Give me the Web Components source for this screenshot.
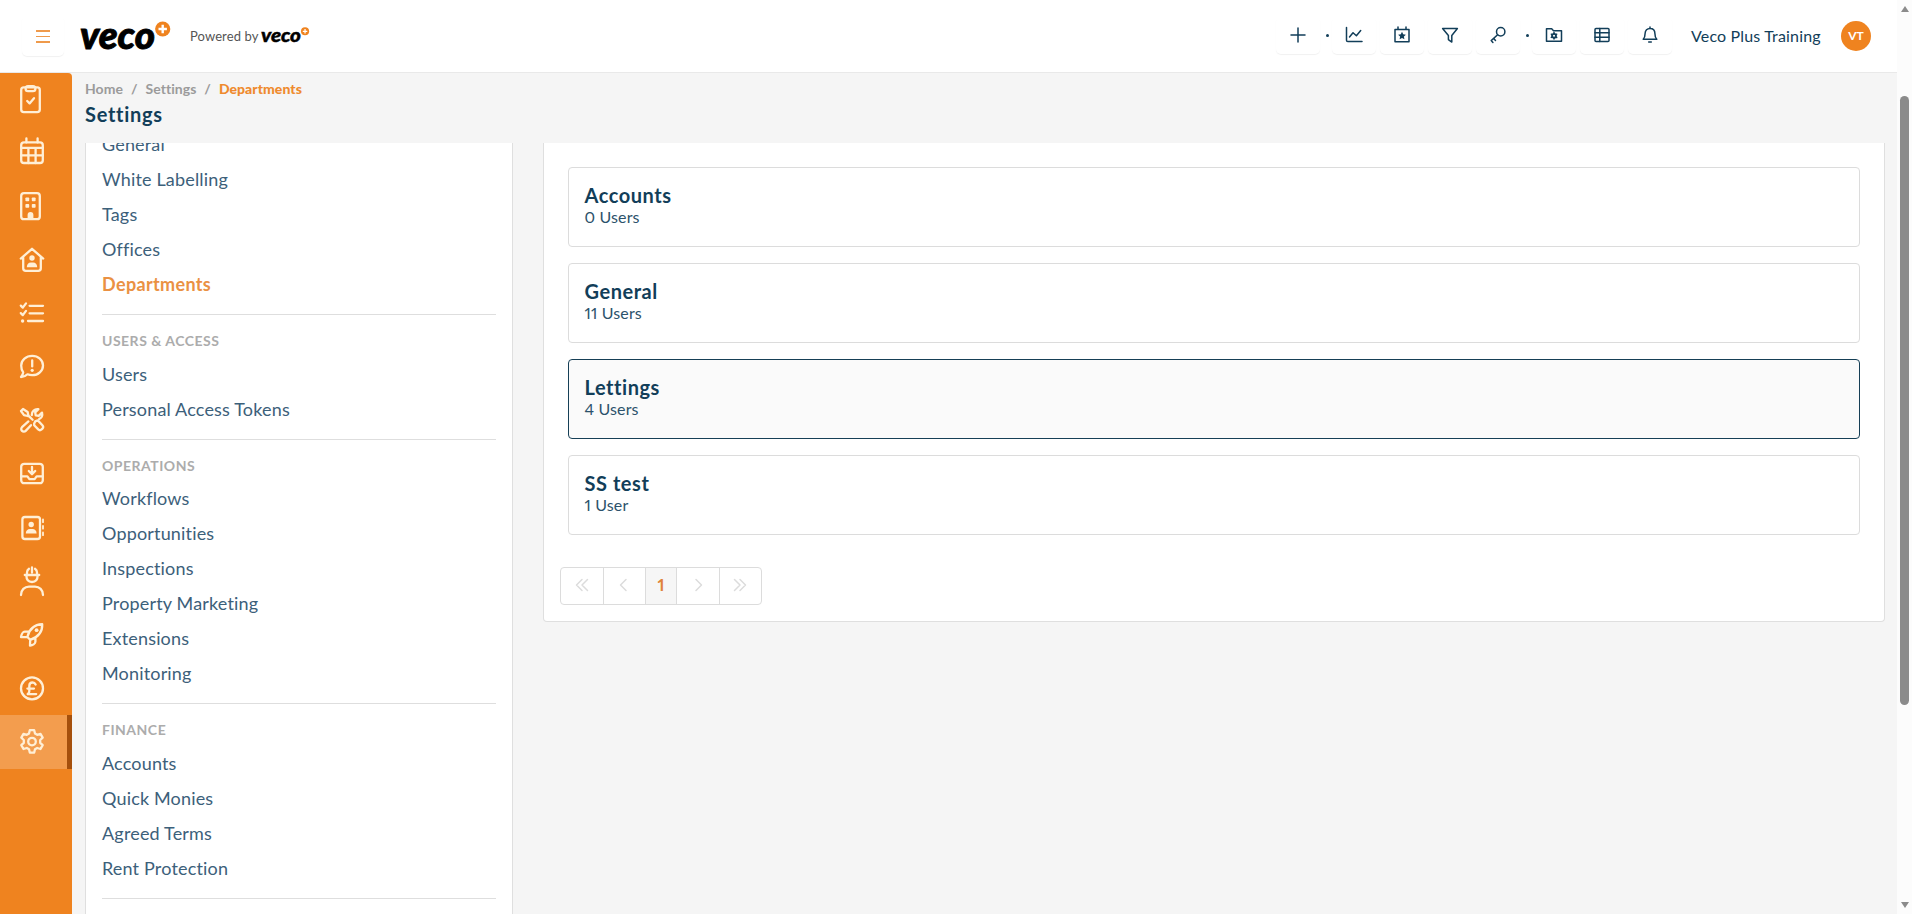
<!DOCTYPE html>
<html lang="en">
<head>
<meta charset="utf-8">
<title>Departments</title>
<style>
  body {
    margin: 0;
    height: 914px;
    overflow: hidden;
    background: #f5f5f5;
    color: #123e59;
    font-family: Lato, "Open Sans", sans-serif;
    font-variant-numeric: proportional-nums;
  }
</style>
</head>
<body>
<veco-app></veco-app>

<script>
const navy = "#123e59";

// 28 x 32 line icons of the side bar
const sideIcons = {
  clipboard: `<rect x="3.2" y="3.4" width="18.6" height="24.8" rx="2.6"/><rect x="7.6" y="2.2" width="9.8" height="5" rx="2.4"/><path d="M9.2 17l2.4 2.4 4.4-5.2"/>`,
  calendar: `<rect x="3.2" y="5.4" width="21.6" height="20.6" rx="2.8"/><path d="M8.4 1.4v4M19.6 1.4v4M3.2 10.8h21.6M3.2 18.4h21.6M10.4 11v15M17.6 11v15"/>`,
  building: `<rect x="3.2" y="2.2" width="18.6" height="26" rx="2.8"/><g class="f"><rect x="7.4" y="6.4" width="3.8" height="3.8" rx=".8"/><rect x="13.8" y="6.4" width="3.8" height="3.8" rx=".8"/><rect x="7.4" y="13" width="3.8" height="3.8" rx=".8"/><rect x="13.8" y="13" width="3.8" height="3.8" rx=".8"/><path d="M9.6 28.2v-4.2a2.9 2.9 0 0 1 5.8 0v4.2z"/></g>`,
  home: `<path d="M2.8 14.6L14 4.8l11.2 9.8M5.2 12.8v11.4a2.6 2.6 0 0 0 2.6 2.6h12.4a2.6 2.6 0 0 0 2.6-2.6V12.8"/><g class="f"><circle cx="14" cy="14" r="2.7"/><path d="M8.8 23.2c0-3 1.8-4.8 4-4.8h2.4c2.2 0 4 1.8 4 4.8z"/></g>`,
  checklist: `<path d="M2.8 7.6l2 2 3.2-4.2M2.8 15.1l2 2 3.2-4.2M11.6 7.8h13.4M11.6 15.3h13.4M10 23h15"/><circle class="f" cx="4.6" cy="23" r="1.7"/>`,
  comment: `<path d="M14.2 4.8c6 0 10.8 4.2 10.8 9.600s-4.800 9.800-10.800 9.800c-1.700 0-3.300-.3-4.700-.9-1.600 1.600-4 2.700-6.500 2.700 1.400-1.500 2-3 2.200-4.700C3.900 19.500 3.200 17.200 3.200 14.400c0-5.400 5-9.600 11-9.600z"/><path d="M14.200 9.400v6"/><circle class="f" cx="14.200" cy="19.300" r="1.600"/>`,
  tools: `<path d="M3 6l2-2 4.600 3 .8 3.600 4.200 4.200M3 6l3 4.200 3.600.8M16.200 18.400l1-2 2.600-1 4.600 4.800a2.500 2.500 0 0 1 0 3.400l-.8.8a2.500 2.500 0 0 1-3.400 0l-4-4.200zM10.400 16.400l-6.400 5.800a2.600 2.600 0 0 0 3.700 3.700l5.300-5.700M13.800 10c-.2-3.600 2.800-6.400 6.600-5.800l-3.200 3.200.5 3 3 .4 3.300-3.200c.7 2.800-.4 5.200-2.700 6.300"/>`,
  inbox: `<rect x="3.2" y="5.8" width="21.6" height="19.4" rx="3"/><path d="M3.4 18.400h6l2 2.700h5.200l2-2.700h6M14 8.800v7M10.800 13l3.200 3.200 3.200-3.200"/>`,
  contacts: `<rect x="4.4" y="5" width="17.6" height="22" rx="2.6"/><path d="M25 7.4v2.8M25 13.9v2.8M25 20.4v2.8" stroke-width="1.8"/><g class="f"><circle cx="13.2" cy="12.5" r="2.7"/><path d="M7.8 21.6c0-3 1.8-4.6 4-4.6h2.8c2.2 0 4 1.6 4 4.6z"/></g>`,
  worker: `<path d="M3 29c0-5.200 3.600-8.400 8-8.400h6c4.400 0 8 3.200 8 8.400"/><path d="M8.400 9.600c0 4.200 2.200 6.400 5.600 6.400s5.600-2.200 5.600-6.400"/><path d="M6.800 9h14.400M9 8.600V6.400c0-1.600.8-2.800 2-3.600M19 8.600V6.400c0-1.600-.8-2.800-2-3.600M14 1.400v5.200"/>`,
  rocket: `<path d="M9.4 18c1.6-6.6 5.2-12.4 14.8-12.8.5 9.2-5.2 13.2-12 15.6zM10.600 12.600H6.800c-1.800 0-3.400 3-3.800 5.400l6.400.2M17.400 19v3.800c0 1.800-3 3.400-5.400 3.800l.2-5.800"/><circle class="f" cx="18.600" cy="11.200" r="1.900"/>`,
  pound: `<circle cx="14" cy="15.400" r="11"/><path d="M17.600 11.500c-.6-1.300-1.700-2-3-2-2 0-3.300 1.400-3.300 3.400v5.300c0 1.300-.6 2.300-1.600 2.900h8.500M9.400 15.600h6.600"/>`,
  gear: `<path d="M11.800 4.200h4.400l.8 3.300 2.200 1.300 3.300-1 2.200 3.800-2.500 2.400v2.800l2.500 2.400-2.200 3.800-3.300-1-2.200 1.300-.8 3.300h-4.400l-.8-3.300-2.200-1.300-3.300 1-2.200-3.800 2.500-2.400V14l-2.500-2.400 2.200-3.800 3.300 1L11 7.500z"/><circle cx="14" cy="15.600" r="3.800"/>`
};

// 18 x 18 icons of the top bar
const topIcons = {
  plus: `<path d="M9 2v14M2 9h14"/>`,
  chart: `<path d="M1.500 1.500v12.700c0 .8.500 1.300 1.300 1.300H17M4.500 11l3.500-4.300 3.400 3L15.700 4.500"/>`,
  event: `<path d="M2 3.500h14v12.300H2zM5 1v2.500M13 1v2.500"/><path class="f" d="M9 5.800l1.200 2.500 2.700.4-2 1.900.5 2.700L9 12l-2.400 1.300.5-2.700-2-1.900 2.700-.4z"/>`,
  filter: `<path d="M1.600 2.500h14.800l-5.600 7v6.600l-3.400-2.500V9.500z"/>`,
  key: `<circle cx="11.700" cy="5.800" r="4.200"/><path d="M8.600 8.800L2.200 14.600l1.700 1.900M4.700 12.500l1.800 2"/>`,
  folder: `<path d="M1.500 2.800h5.200l1.800 1.900h8v10.500h-15z"/><circle cx="9" cy="9.800" r="2" stroke-width="1.800"/><path d="M9 6.600V8M9 11.600V13M6.300 8.200l1.200.7M10.600 10.800l1.100.7M6.300 11.400l1.200-.7M10.600 8.900l1.100-.7"/>`,
  table: `<rect x="2" y="2.500" width="14" height="13" rx="1"/><path d="M2 6.800h14M2 11.200h14M6.800 2.500v13"/>`,
  bell: `<path d="M2.200 13.200c1.500-1.500 1.900-3 1.900-5.700C4.100 4.300 6.200 2.400 9 2.400s4.900 1.900 4.900 5.100c0 2.700.4 4.200 1.900 5.700zM9 1v1.400M7.700 16h2.600"/>`
};

function shadow(el, html) {
  const root = el.attachShadow({ mode: "open" });
  root.innerHTML = html;
  return root;
}

class VecoLogo extends HTMLElement {
  constructor() {
    super();
    shadow(this, `
      <style>
        :host { display: block; width: 92px; height: 30px; }
        svg { display: block; width: 100%; height: 100%; overflow: visible; }
        text { font: italic 900 37px Lato, sans-serif; fill: #000; stroke: #000; stroke-width: .9; }
      </style>
      <svg viewBox="0 0 92 30">
        <text x="-1" y="27.500" textLength="75" lengthAdjust="spacingAndGlyphs">veco</text>
        <circle cx="81.700" cy="8" r="7.600" fill="#ef831f"/>
        <path d="M81.700 3.800v8.400M77.500 8h8.400" stroke="#fff" stroke-width="2.400"/>
      </svg>`);
  }
}

class TopButton extends HTMLElement {
  connectedCallback() {
    shadow(this, `
      <style>
        :host { display: flex; width: 44px; height: 37px; align-items: center; justify-content: center;
          border-radius: 5px; box-shadow: 0 1px 1px rgba(0, 0, 0, .06); }
        svg { width: 18px; height: 18px; margin-top: -2px; fill: none; stroke: ${navy}; stroke-width: 1.500;
          stroke-linejoin: round; stroke-linecap: round; }
        .f { fill: ${navy}; stroke: none; }
      </style>
      <svg viewBox="0 0 18 18">${topIcons[this.getAttribute("icon")]}</svg>`);
  }
}

class TopBar extends HTMLElement {
  constructor() {
    super();
    shadow(this, `
      <style>
        :host { display: flex; box-sizing: border-box; height: 73px; padding: 0 26px 0 22px;
          align-items: flex-start; background: #fff; border-bottom: 1px solid #e9e9e9; }
        .burger { display: flex; flex-direction: column; gap: 4px; box-sizing: border-box;
          width: 42px; height: 40px; margin: 16px 17px 0 0; padding: 14px 14px 0;
          border-radius: 5px; box-shadow: 0 1px 1px rgba(0, 0, 0, .06); }
        .burger i { height: 1.500px; background: #ef9a4b; }
        .logo { margin-top: 21px; }
        .powered { margin: 27px 4px 0 17px; width: 67px; font-size: 13px; line-height: 19px; color: #555;
          letter-spacing: .1px; white-space: nowrap; }
        .small { width: 50px; height: 16px; margin-top: 27px; }
        nav { display: flex; gap: 4px; margin: 17px 0 0 auto; align-items: center; }
        .dot { width: 3px; height: 3px; margin: 0 -.5px 0 1.500px; border-radius: 50%; background: ${navy}; }
        .user { margin: 24px 20px 0 19px; width: 130px; font-size: 16px; line-height: 23px; letter-spacing: .17px; white-space: nowrap; }
        .avatar { width: 30px; height: 30px; margin-top: 21px; border-radius: 50%; background: #ef831f;
          color: #fff; font: 700 12px/30px Lato, sans-serif; text-align: center; }
      </style>
      <div class="burger"><i></i><i></i><i></i></div>
      <veco-logo class="logo"></veco-logo>
      <span class="powered">Powered by</span>
      <veco-logo class="small"></veco-logo>
      <nav>
        <top-button icon="plus"></top-button>
        <span class="dot"></span>
        <top-button icon="chart"></top-button>
        <top-button icon="event"></top-button>
        <top-button icon="filter"></top-button>
        <top-button icon="key"></top-button>
        <span class="dot"></span>
        <top-button icon="folder"></top-button>
        <top-button icon="table"></top-button>
        <top-button icon="bell"></top-button>
      </nav>
      <span class="user">Veco Plus Training</span>
      <span class="avatar">VT</span>`);
  }
}

class SideBar extends HTMLElement {
  constructor() {
    super();
    const items = Object.keys(sideIcons).map(name => `
      <a class="${name === "gear" ? "active" : ""}"><svg viewBox="0 0 28 32">${sideIcons[name]}</svg></a>`).join("");
    shadow(this, `
      <style>
        :host { display: block; width: 72px; flex: none; background: #ef831f; border-radius: 0 4px 0 0; }
        a { display: flex; box-sizing: border-box; height: 53.540px; padding-left: 18px; align-items: center; }
        .active { background: #f39d4e; border-right: 5px solid #a5500c; }
        svg { width: 28px; height: 32px; fill: none; stroke: #ffefd6; stroke-width: 2.300;
          stroke-linecap: round; stroke-linejoin: round; }
        .f { fill: #ffefd6; stroke: none; }
      </style>${items}`);
  }
}

class PageHeading extends HTMLElement {
  constructor() {
    super();
    shadow(this, `
      <style>
        :host { display: block; height: 70px; }
        .crumbs { display: flex; padding-top: 5px; font-size: 14px; font-weight: 700; line-height: 22px;
          letter-spacing: .05px; color: #9b9b9b; white-space: nowrap; }
        .crumbs i { width: 22.500px; font-style: normal; text-align: center; }
        .crumbs b { color: #ef8a2e; }
        h1 { margin: 0; font-size: 20px; line-height: 28px; letter-spacing: .7px; }
      </style>
      <div class="crumbs"><span>Home</span><i>/</i><span>Settings</span><i>/</i><b>Departments</b></div>
      <h1>Settings</h1>`);
  }
}

class MenuGroup extends HTMLElement {
  connectedCallback() {
    const title = this.getAttribute("title-text");
    shadow(this, `
      <style>
        :host { display: block; padding-bottom: 12px; border-bottom: 1px solid #dedede; }
        h2 { margin: 0; height: 41.600px; font-size: 14px; font-weight: 700; line-height: 52px; color: #acacac; letter-spacing: .5px; }
      </style>
      ${title ? `<h2>${title}</h2>` : ""}
      <slot></slot>`);
  }
}

class MenuItem extends HTMLElement {
  constructor() {
    super();
    shadow(this, `
      <style>
        :host { display: block; height: 35px; font-size: 18px; line-height: 34px; letter-spacing: .17px; color: #3c607a; white-space: nowrap; }
        :host([active]) { color: #ea9143; font-weight: 700; letter-spacing: .35px; }
      </style>
      <slot></slot>`);
  }
}

class SettingsMenu extends HTMLElement {
  constructor() {
    super();
    shadow(this, `
      <style>
        :host { display: block; box-sizing: border-box; width: 428px; height: 771px; overflow: hidden; padding: 0 16px;
          background: #fff; border: 1px solid #dfdfdf; border-width: 0 1px; }
        .list { margin-top: -16px; }
      </style>
      <div class="list">
        <menu-group>
          <menu-item>General</menu-item>
          <menu-item>White Labelling</menu-item>
          <menu-item>Tags</menu-item>
          <menu-item>Offices</menu-item>
          <menu-item active>Departments</menu-item>
        </menu-group>
        <menu-group title-text="USERS &amp; ACCESS">
          <menu-item>Users</menu-item>
          <menu-item>Personal Access Tokens</menu-item>
        </menu-group>
        <menu-group title-text="OPERATIONS">
          <menu-item>Workflows</menu-item>
          <menu-item>Opportunities</menu-item>
          <menu-item>Inspections</menu-item>
          <menu-item>Property Marketing</menu-item>
          <menu-item>Extensions</menu-item>
          <menu-item>Monitoring</menu-item>
        </menu-group>
        <menu-group title-text="FINANCE">
          <menu-item>Accounts</menu-item>
          <menu-item>Quick Monies</menu-item>
          <menu-item>Agreed Terms</menu-item>
          <menu-item>Rent Protection</menu-item>
        </menu-group>
      </div>`);
  }
}

class DepartmentCard extends HTMLElement {
  connectedCallback() {
    shadow(this, `
      <style>
        :host { display: block; box-sizing: border-box; height: 80px; padding: 15px 16px 15px 15.500px; background: #fff;
          border: 1px solid #dcdcdc; border-radius: 4px; }
        :host([selected]) { background: #fafafa; border-color: #163f56; }
        h3 { margin: 0; font-size: 20px; line-height: 25px; letter-spacing: .55px; }
        p { margin: 0; font-size: 16px; line-height: 18px; letter-spacing: .15px; color: #2c526b; }
      </style>
      <h3>${this.getAttribute("name")}</h3>
      <p><slot></slot></p>`);
  }
}

class PageNav extends HTMLElement {
  constructor() {
    super();
    shadow(this, `
      <style>
        :host { display: flex; box-sizing: border-box; width: 202px; height: 38px; border: 1px solid #dcdcdc; border-radius: 4px; overflow: hidden; }
        span { display: flex; flex: 1; align-items: center; justify-content: center; border-right: 1px solid #dcdcdc; }
        span:last-child { border: 0; }
        .current { flex: 0 0 30px; background: #f6f6f6; color: #e0833a; font-size: 17px; font-weight: 700; line-height: 34px; align-items: flex-start; }
        svg { width: 14px; height: 14px; margin-top: -2px; fill: none; stroke: #dcdcdc; stroke-width: 1.500; stroke-linecap: round; stroke-linejoin: round; }
      </style>
      <span><svg viewBox="0 0 14 14"><path d="M7 1.500L1.500 7 7 12.500M12.500 1.500L7 7l5.500 5.500"/></svg></span>
      <span><svg viewBox="0 0 14 14"><path d="M9 1.500L3.500 7 9 12.500"/></svg></span>
      <span class="current">1</span>
      <span><svg viewBox="0 0 14 14"><path d="M5 1.500L10.500 7 5 12.500"/></svg></span>
      <span><svg viewBox="0 0 14 14"><path d="M1.500 1.500L7 7l-5.500 5.500M7 1.500L12.500 7 7 12.500"/></svg></span>`);
  }
}

class DepartmentPanel extends HTMLElement {
  constructor() {
    super();
    shadow(this, `
      <style>
        :host { display: block; box-sizing: border-box; flex: 1; height: 479px; padding: 24px 24px 0; background: #fff;
          border: 1px solid #dfdfdf; border-top: 0; border-radius: 0 0 4px 4px; }
        .cards { display: grid; gap: 16px; }
        page-nav { margin: 32px 0 0 -8px; }
      </style>
      <div class="cards">
        <department-card name="Accounts">0 Users</department-card>
        <department-card name="General">11 Users</department-card>
        <department-card name="Lettings" selected>4 Users</department-card>
        <department-card name="SS test">1 User</department-card>
      </div>
      <page-nav></page-nav>`);
  }
}

class ScrollTrack extends HTMLElement {
  constructor() {
    super();
    shadow(this, `
      <style>
        :host { display: flex; flex-direction: column; align-items: center; box-sizing: border-box;
          width: 15px; height: 914px; padding: 6px 0; background: #fcfcfc; }
        i { border: 4.500px solid transparent; border-top: 0; border-bottom: 6px solid #8b8b8b; }
        .thumb { width: 9px; height: 609px; margin: 84px 0 auto; border-radius: 5px; background: #8b8b8b; }
        .down { transform: rotate(180deg); }
      </style>
      <i></i><div class="thumb"></div><i class="down"></i>`);
  }
}

class VecoApp extends HTMLElement {
  constructor() {
    super();
    shadow(this, `
      <style>
        :host { display: grid; grid-template-columns: 1fr 15px; height: 914px; }
        .page { display: flex; flex-direction: column; }
        .body { display: flex; flex: 1; }
        main { flex: 1; padding: 0 12px 0 13px; }
        .columns { display: flex; gap: 30px; align-items: flex-start; }
      </style>
      <div class="page">
        <top-bar></top-bar>
        <div class="body">
          <side-bar></side-bar>
          <main>
            <page-heading></page-heading>
            <div class="columns">
              <settings-menu></settings-menu>
              <department-panel></department-panel>
            </div>
          </main>
        </div>
      </div>
      <scroll-track></scroll-track>`);
  }
}

customElements.define("veco-logo", VecoLogo);
customElements.define("top-button", TopButton);
customElements.define("top-bar", TopBar);
customElements.define("side-bar", SideBar);
customElements.define("page-heading", PageHeading);
customElements.define("menu-group", MenuGroup);
customElements.define("menu-item", MenuItem);
customElements.define("settings-menu", SettingsMenu);
customElements.define("department-card", DepartmentCard);
customElements.define("page-nav", PageNav);
customElements.define("department-panel", DepartmentPanel);
customElements.define("scroll-track", ScrollTrack);
customElements.define("veco-app", VecoApp);
</script>
</body>
</html>
